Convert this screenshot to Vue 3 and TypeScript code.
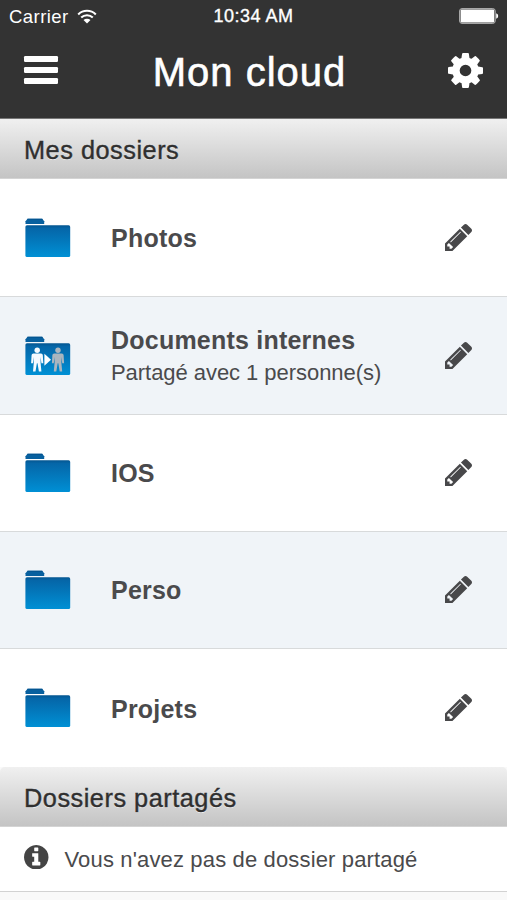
<script setup lang="ts">
interface Folder {
  name: string
  sharedWith?: number
}

const folders: Folder[] = [
  { name: 'Photos' },
  { name: 'Documents internes', sharedWith: 1 },
  { name: 'IOS' },
  { name: 'Perso' },
  { name: 'Projets' },
]
</script>

<template>
  <main class="screen">
    <header class="topbar">
      <div class="status">
        <div class="carrier">
          <span>Carrier</span>
          <svg class="wifi" viewBox="0 0 20 15">
            <path d="M1.2 5.4a12.5 12.5 0 0 1 17.6 0" />
            <path d="M4.2 8.6a8.3 8.3 0 0 1 11.6 0" />
            <path class="dot" d="M6.5 11.1a5 5 0 0 1 7 0L10 14.6z" />
          </svg>
        </div>
        <span class="time">10:34 AM</span>
        <svg class="battery" viewBox="0 0 40 16">
          <rect class="shell" x=".6" y=".6" width="35.6" height="14.8" rx="2.4" />
          <rect x="1.6" y="1.6" width="33.6" height="12.8" rx="1.2" />
          <path d="M37.2 5.3q2 .5 2 2.7t-2 2.7z" />
        </svg>
      </div>
      <div class="navbar">
        <button class="menu" type="button"><i /><i /><i /></button>
        <h1>Mon cloud</h1>
        <svg class="gear" viewBox="0 -1408 1536 1536">
          <path transform="scale(1 -1)" d="M1024 640q0 106 -75 181t-181 75t-181 -75t-75 -181t75 -181t181 -75t181 75t75 181zM1536 749v-222q0 -12 -8 -23t-20 -13l-185 -28q-19 -54 -39 -91q35 -50 107 -138q10 -12 10 -25t-9 -23q-27 -37 -99 -108t-94 -71q-12 0 -26 9l-138 108q-44 -23 -91 -38q-16 -136 -29 -186q-7 -28 -36 -28h-222q-14 0 -24.5 8.5t-11.5 21.5l-28 184q-49 16 -90 37l-141 -107q-10 -9 -25 -9q-14 0 -25 11q-126 114 -165 168q-7 10 -7 23q0 12 8 23q15 21 51 66.5t54 70.5q-27 50 -41 99l-183 27q-13 2 -21 12.5t-8 23.5v222q0 12 8 23t19 13l186 28q14 46 39 92q-40 57 -107 138q-10 12 -10 24q0 10 9 23q26 36 98.5 107.5t94.5 71.5q13 0 26 -10l138 -107q44 23 91 38q16 136 29 186q7 28 36 28h222q14 0 24.5 -8.5t11.5 -21.5l28 -184q49 -16 90 -37l142 107q9 9 24 9q13 0 25 -10q129 -119 165 -170q7 -8 7 -22q0 -12 -8 -23q-15 -21 -51 -66.5t-54 -70.5q26 -50 41 -98l183 -28q13 -2 21 -12.5t8 -23.5z" />
        </svg>
      </div>
    </header>

    <h2 class="section">Mes dossiers</h2>
    <ul class="folders">
      <li v-for="folder in folders" :key="folder.name">
        <svg class="folder" viewBox="0 0 46 40">
          <defs>
            <linearGradient id="folder-fill" x1="0" y1="0" x2="0" y2="1">
              <stop offset="0" stop-color="#045691" />
              <stop offset=".1" stop-color="#0566a8" />
              <stop offset="1" stop-color="#0090d5" />
            </linearGradient>
          </defs>
          <path fill="#07609f" d="M.5 6V3.2L2.6.8h14.6l2 2.4V6z" />
          <path fill="#03508a" d="M1.8 1.6 2.6.8h14.6l.8.9z" />
          <rect x=".4" y="7.3" width="44.8" height="31.8" rx="1.6" fill="url(#folder-fill)" />
          <g v-if="folder.sharedWith">
            <g fill="#f5faff">
              <circle cx="12.2" cy="14.2" r="2.7" />
              <path d="M8.4 17.4h7.6q1.6 0 1.8 1.6l.5 8.2h-1.9l-.8-6.2v5.8l.8 8.8h-2.5l-1.4-8.4h-.6l-1.4 8.4H8l.8-8.8v-5.8l-.8 6.2H6.1l.5-8.2q.2-1.6 1.8-1.6z" />
            </g>
            <path fill="#fff" d="M19.4 17.8l6.6 6-6.6 6z" />
            <g fill="#aab5bf">
              <circle cx="33" cy="14.2" r="2.7" />
              <path d="M29.2 17.4h7.6q1.6 0 1.8 1.6l.5 8.2h-1.9l-.8-6.2v5.8l.8 8.8h-2.5l-1.4-8.4h-.6l-1.4 8.4h-2.5l.8-8.8v-5.8l-.8 6.2h-1.9l.5-8.2q.2-1.6 1.8-1.6z" />
            </g>
          </g>
        </svg>
        <div class="label">
          <strong>{{ folder.name }}</strong>
          <span v-if="folder.sharedWith">Partagé avec {{ folder.sharedWith }} personne(s)</span>
        </div>
        <svg class="pencil" viewBox="0 -1387 1515 1515">
          <path transform="scale(1 -1)" d="M363 0l91 91l-235 235l-91 -91v-107h128v-128h107zM886 928q0 22 -22 22q-10 0 -17 -7l-542 -542q-7 -7 -7 -17q0 -22 22 -22q10 0 17 7l542 542q7 7 7 17zM832 1120l416 -416l-832 -832h-416v416zM1515 1024q0 -53 -37 -90l-166 -166l-416 416l166 165q36 38 90 38q53 0 91 -38l235 -234q37 -39 37 -91z" />
        </svg>
      </li>
    </ul>

    <h2 class="section shared">Dossiers partagés</h2>
    <p class="notice">
      <svg viewBox="0 -1408 1536 1536">
        <path transform="scale(1 -1)" d="M1024 160v160q0 14 -9 23t-23 9h-96v512q0 14 -9 23t-23 9h-320q-14 0 -23 -9t-9 -23v-160q0 -14 9 -23t23 -9h96v-320h-96q-14 0 -23 -9t-9 -23v-160q0 -14 9 -23t23 -9h448q14 0 23 9t9 23zM896 1056v160q0 14 -9 23t-23 9h-192q-14 0 -23 -9t-9 -23v-160q0 -14 9 -23t23 -9h192q14 0 23 9t9 23zM1536 640q0 -209 -103 -385.5t-279.5 -279.5t-385.5 -103t-385.5 103t-279.5 279.5t-103 385.5t103 385.5t279.5 279.5t385.5 103t385.5 -103t279.5 -279.5t103 -385.5z" />
      </svg>
      <span>Vous n'avez pas de dossier partagé</span>
    </p>
  </main>
</template>

<style>
body {
  margin: 0;
  background: #f9f9f9;
}
</style>

<style scoped>
.screen {
  height: 900px;
  overflow: hidden;
  background: #f9f9f9;
  color: #4a4a4c;
  font-family: "Liberation Sans", Arial, sans-serif;
}
svg {
  display: block;
  flex: none;
}
.topbar {
  box-sizing: border-box;
  height: 119px;
  background: #333;
  border-bottom: 1px solid #777;
  color: #fff;
}
.status {
  display: grid;
  grid-template-columns: 1fr auto 1fr;
  align-items: center;
  height: 33px;
  padding: 0 9px;
  font-size: 18.5px;
  line-height: 33px;
}
.carrier {
  display: flex;
  align-items: center;
  gap: 8px;
  letter-spacing: 0.45px;
}
.wifi {
  width: 20px;
  height: 15px;
  margin-top: -1px;
  fill: none;
  stroke: #fff;
  stroke-width: 2.1;
}
.wifi .dot {
  fill: #fff;
  stroke: none;
}
.time {
  font-size: 18px;
  letter-spacing: 0.5px;
  -webkit-text-stroke: 0.35px #fff;
}
.battery {
  width: 40px;
  height: 16px;
  justify-self: end;
  margin-right: -1px;
  margin-top: -1px;
  fill: #fff;
}
.battery .shell {
  fill: none;
  stroke: #b5b5b5;
  stroke-width: 1;
}
.navbar {
  display: grid;
  grid-template-columns: 1fr auto 1fr;
  align-items: center;
  height: 74px;
  padding: 0 24px;
}
.menu {
  display: grid;
  gap: 5.3px;
  width: 34px;
  padding: 0;
  border: 0;
  background: none;
}
.menu i {
  height: 6px;
  border-radius: 1.3px;
  background: #fff;
}
h1 {
  margin: 4px 8px 0 0;
  font-size: 40px;
  font-weight: 400;
  line-height: 46px;
  letter-spacing: 1px;
  -webkit-text-stroke: 0.6px #fff;
}
.gear {
  width: 35px;
  height: 35px;
  justify-self: end;
  fill: #fff;
}
.section {
  box-sizing: border-box;
  height: 60px;
  margin: 0;
  padding: 1px 24px 0;
  border-bottom: 1px solid #d4d4d4;
  background: linear-gradient(#f0f0f0, #c4c4c4);
  color: #2f2f2f;
  font-size: 25.3px;
  font-weight: 400;
  line-height: 60px;
  letter-spacing: 0.52px;
  text-shadow: 0 1px 0 #eee;
  -webkit-text-stroke: 0.4px #2f2f2f;
}
.shared {
  border-radius: 5px 5px 0 0;
}
.folders {
  margin: 0;
  padding: 0;
  list-style: none;
  background: #fff;
}
.folders li {
  box-sizing: border-box;
  display: flex;
  align-items: center;
  height: 117px;
  padding: 0 35px 2px 25px;
  border-bottom: 1px solid #d8dadb;
}
.folders li:nth-child(even) {
  background: #f0f4f8;
}
.folders li:first-child,
.folders li:nth-child(2),
.folders li:last-child {
  height: 118px;
  padding-bottom: 0;
}
.folders li:last-child {
  border-color: #fff;
}
.folder {
  width: 46px;
  height: 40px;
  margin-top: 1px;
}
.label {
  display: flex;
  flex: 1;
  flex-direction: column;
  gap: 3px;
  padding: 2px 0 0 40px;
}
.folders li:first-child .label {
  padding-top: 0;
}
.label strong {
  font-size: 25px;
  line-height: 30px;
  letter-spacing: 0.22px;
}
.label span {
  font-size: 22px;
  line-height: 30px;
  letter-spacing: -0.05px;
}
.pencil {
  width: 27px;
  height: 27px;
  fill: #48484a;
}
.notice {
  box-sizing: border-box;
  display: flex;
  align-items: center;
  gap: 16px;
  height: 65px;
  margin: 0;
  padding: 0 24px;
  border-bottom: 1px solid #d2d2d2;
  background: #fff;
  font-size: 22px;
  letter-spacing: 0.15px;
}
.notice svg {
  width: 24.5px;
  height: 24.5px;
  margin-bottom: 4px;
  fill: #444;
}
.notice span {
  padding-top: 2px;
}
</style>
